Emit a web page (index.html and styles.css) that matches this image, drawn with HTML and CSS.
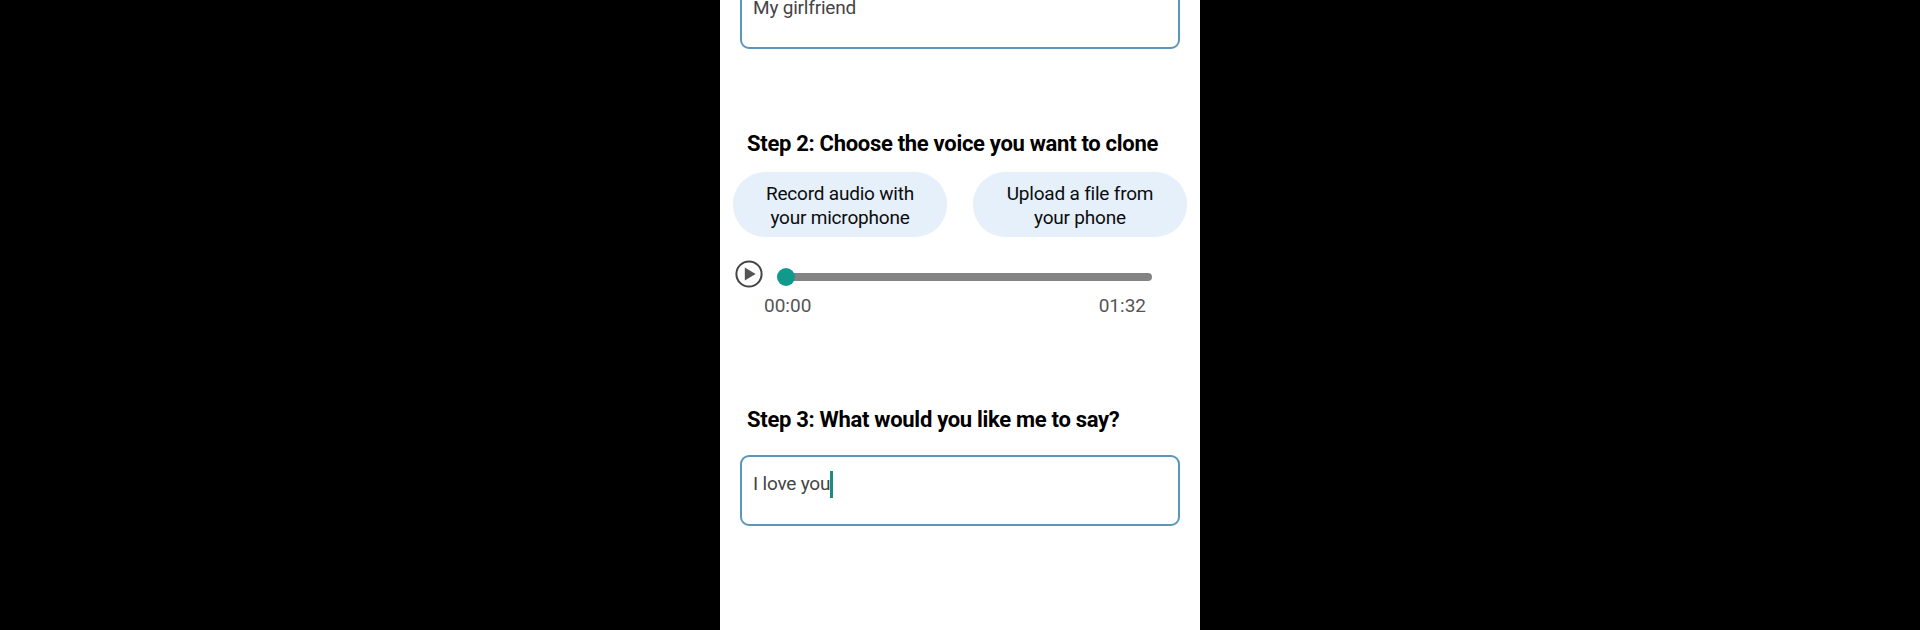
FILE: index.html
```html
<!DOCTYPE html>
<html lang="en">
<head>
<meta charset="utf-8">
<title>Voice clone</title>
<link rel="stylesheet" href="styles.css">
</head>
<body>
<main class="panel">
  <div class="field"><span class="field-text">My girlfriend</span></div>
  <h2 class="step step-two">Step 2: Choose the voice you want to clone</h2>
  <div class="choices">
    <div class="choice">Record audio with<br>your microphone</div>
    <div class="choice">Upload a file from<br>your phone</div>
  </div>
  <div class="player">
    <svg class="play" width="28" height="28" viewBox="0 0 28 28" aria-hidden="true">
      <circle cx="14" cy="14" r="12.6" fill="none" stroke="#444" stroke-width="2"/>
      <path d="M9.8 7.6 L20.6 14 L9.8 20.4 Z" fill="#555"/>
    </svg>
    <div class="track"><span class="thumb"></span></div>
  </div>
  <div class="times"><span>00:00</span><span>01:32</span></div>
  <h2 class="step step-three">Step 3: What would you like me to say?</h2>
  <div class="field field-message"><span class="field-text">I love you</span><span class="caret"></span></div>
</main>
</body>
</html>
```
FILE: styles.css
```css
* { box-sizing: border-box; }
html, body { margin: 0; height: 630px; overflow: hidden; background: #000; }
body { display: flex; justify-content: center; font-family: Roboto, "Liberation Sans", sans-serif; }
.panel { width: 480px; height: 652px; margin-top: -22px; background: #fff; display: flex; flex-direction: column; }
.field { width: 440px; height: 71px; margin: 0 20px; padding: 16px 11px; border: 2px solid #5b96bd; border-radius: 9px; display: flex; align-items: flex-start; }
.field-message { margin-top: 21px; padding-top: 15px; }
.field-text { font-size: 19px; letter-spacing: -0.2px; line-height: 24px; color: #444; }
.caret { width: 3px; height: 27px; margin-top: -1px; background: #1f8a7d; }
.step { margin: 0 0 0 27px; font-size: 22px; font-weight: 700; letter-spacing: -0.3px; line-height: 28px; color: #000; }
.step-two { margin-top: 81px; }
.step-three { margin-top: 88px; }
.choices { display: flex; justify-content: space-between; margin: 14px 13px 0; }
.choice { width: 214px; height: 65px; padding-top: 2px; display: flex; align-items: center; justify-content: center; text-align: center; border-radius: 32px; background: #e5f0fa; font-size: 19px; letter-spacing: -0.2px; line-height: 24px; color: #0c0c0c; }
.player { display: flex; align-items: center; margin: 23px 0 0 15px; height: 32px; }
.play { flex: none; margin-top: -5px; }
.track { position: relative; width: 367px; height: 8px; margin: 2px 0 0 22px; background: #838383; border-radius: 4px; }
.thumb { position: absolute; left: -8px; top: -5px; width: 18px; height: 18px; border-radius: 50%; background: #0f9a8c; }
.times { display: flex; justify-content: space-between; margin: 2px 54px 0 44px; font-size: 19px; line-height: 24px; color: #555; }
```
